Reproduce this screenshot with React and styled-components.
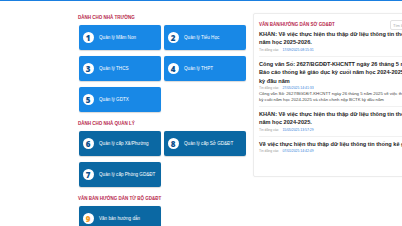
import React from 'react';
import styled, { createGlobalStyle } from 'styled-components';

const GlobalStyle = createGlobalStyle`
    html, body {
        margin: 0;
        padding: 0;
        background: #fff;
        overflow: hidden;
        font-family: "Liberation Sans", Arial, sans-serif;
    }
`;

const schoolItems = [
    { no: 1, label: 'Quản lý Mầm Non' },
    { no: 2, label: 'Quản lý Tiểu Học' },
    { no: 3, label: 'Quản lý THCS' },
    { no: 4, label: 'Quản lý THPT' },
    { no: 5, label: 'Quản lý GDTX' },
];

const managerItems = [
    { no: 6, label: 'Quản lý cấp Xã/Phường' },
    { no: 8, label: 'Quản lý cấp Sở GD&ĐT' },
    { no: 7, label: 'Quản lý cấp Phòng GD&ĐT' },
];

const posts = [
    {
        title: 'KHẨN: Về việc thực hiện thu thập dữ liệu thông tin thống kê giáo dục đầu\nnăm học 2025-2026.',
        date: '17/09/2025 08:15:31',
    },
    {
        title: 'Công văn Số: 2627/BGDĐT-KHCNTT ngày 26 tháng 5 năm 2025 về việc\nBáo cáo thống kê giáo dục kỳ cuối năm học 2024-2025 và chấn chỉnh nộp BCTK\nkỳ đầu năm',
        date: '27/05/2025 14:41:33',
        desc: 'Công văn Số: 2627/BGDĐT-KHCNTT ngày 26 tháng 5 năm 2025 về việc thực hiện báo cáo thống kê giáo dục\nkỳ cuối năm học 2024-2025 và chấn chỉnh nộp BCTK kỳ đầu năm',
    },
    {
        title: 'KHẨN: Về việc thực hiện thu thập dữ liệu thông tin thống kê giáo dục cuối\nnăm học 2024-2025.',
        date: '15/05/2025 13:57:29',
    },
    {
        title: 'Về việc thực hiện thu thập dữ liệu thông tin thống kê giáo dục',
        date: '07/01/2025 14:42:49',
    },
];

const App = () => {
    return (
        <>
            <GlobalStyle />
            <TopBar />
            <Page>
                <LeftColumn>
                    <Section>
                        <SectionTitle>Dành cho nhà trường</SectionTitle>
                        <CardGrid>
                            {schoolItems.map((item) => (
                                <Card key={item.no} $tone="light">
                                    <NumberBadge>{item.no}</NumberBadge>
                                    <CardLabel>{item.label}</CardLabel>
                                </Card>
                            ))}
                        </CardGrid>
                    </Section>
                    <Section>
                        <SectionTitle>Dành cho nhà quản lý</SectionTitle>
                        <CardGrid>
                            {managerItems.map((item) => (
                                <Card key={item.no} $tone="dark">
                                    <NumberBadge>{item.no}</NumberBadge>
                                    <CardLabel>{item.label}</CardLabel>
                                </Card>
                            ))}
                        </CardGrid>
                    </Section>
                    <Section>
                        <SectionTitle>Văn bản hướng dẫn từ Bộ GD&ĐT</SectionTitle>
                        <CardGrid>
                            <Card $tone="dark">
                                <NumberBadge $accent>9</NumberBadge>
                                <CardLabel>Văn bản hướng dẫn</CardLabel>
                            </Card>
                        </CardGrid>
                    </Section>
                </LeftColumn>

                <NewsPanel>
                    <PanelHeader>
                        <PanelTitle>Văn bản/hướng dẫn Sở GD&ĐT</PanelTitle>
                        <SearchInput placeholder="Tìm kiếm..." />
                    </PanelHeader>
                    {posts.map((post, i) => (
                        <Post key={i}>
                            <PostTitle>{post.title}</PostTitle>
                            <PostMeta>
                                Tin đăng vào <span>{post.date}</span>
                            </PostMeta>
                            {post.desc && <PostDesc>{post.desc}</PostDesc>}
                        </Post>
                    ))}
                </NewsPanel>
            </Page>
        </>
    );
};

const TopBar = styled.div`
    height: 1px;
    background: #1a7fe0;
`;

const Page = styled.main`
    display: flex;
    align-items: flex-start;
    gap: 7px;
    padding: 12px 0 0 79px;
`;

const LeftColumn = styled.div`
    width: 167px;
    flex-shrink: 0;
    padding-top: 1px;
    display: flex;
    flex-direction: column;
    gap: 8px;
`;

const Section = styled.section`
    display: flex;
    flex-direction: column;
`;

const SectionTitle = styled.h2`
    margin: 0 0 3px -1px;
    font-size: 4.5px;
    line-height: 8px;
    font-weight: 700;
    text-transform: uppercase;
    color: #b8284c;
`;

const PanelTitle = styled(SectionTitle).attrs({ as: 'h3' })`
    margin: 0;
    line-height: 6px;
`;

const CardGrid = styled.div`
    display: grid;
    grid-template-columns: 82px 82px;
    column-gap: 3px;
    row-gap: 6px;
`;

const Card = styled.div`
    height: 25px;
    box-sizing: border-box;
    display: flex;
    align-items: center;
    gap: 5.5px;
    padding-left: 3.5px;
    border-radius: 2px;
    background: ${({ $tone }) => ($tone === 'dark' ? '#0b68a3' : '#1888e6')};
    box-shadow: 0 0.5px 1px rgba(0, 0, 0, 0.15);
    cursor: pointer;
`;

const NumberBadge = styled.span`
    width: 11px;
    height: 11px;
    border-radius: 50%;
    background: #fff;
    display: flex;
    align-items: center;
    justify-content: center;
    font-family: "Open Sans", sans-serif;
    font-size: 8px;
    font-weight: 800;
    line-height: 1;
    color: ${({ $accent }) => ($accent ? '#f39a1e' : '#0b4f8c')};
    flex-shrink: 0;
`;

const CardLabel = styled.span`
    font-size: 4.6px;
    color: #fff;
    white-space: nowrap;
`;

const NewsPanel = styled.aside`
    width: 243px;
    height: 164px;
    flex-shrink: 0;
    box-sizing: border-box;
    border: 1px solid #ececec;
    border-radius: 2px;
    padding: 8px 5px;
    background: #fff;
    box-shadow: 0 0 2px rgba(0, 0, 0, 0.04);
`;

const PanelHeader = styled.div`
    display: flex;
    align-items: center;
    height: 6px;
    margin-bottom: 2px;
`;

const SearchInput = styled.input`
    flex: 0 0 100px;
    width: 100px;
    height: 10px;
    margin-left: auto;
    box-sizing: border-box;
    border: 1px solid #e2e2e2;
    border-radius: 2px;
    padding: 0 2px;
    font-size: 4px;
    font-family: inherit;
    outline: none;

    &::placeholder {
        color: #aaa;
    }
`;

const Post = styled.article`
    padding: 3px 0;
    border-bottom: 1px solid #f1f1f1;

    &:first-of-type {
        padding-top: 0;
    }
    &:last-of-type {
        border-bottom: none;
    }
`;

const PostTitle = styled.div`
    font-size: 5.6px;
    line-height: 8.4px;
    font-weight: 700;
    color: #252525;
    white-space: pre-line;
`;

const PostMeta = styled.div`
    font-size: 3.4px;
    line-height: 6px;
    color: #9a9a9a;

    span {
        margin-left: 3px;
        color: #2f7ed8;
    }
`;

const PostDesc = styled.div`
    font-size: 4.3px;
    line-height: 6px;
    color: #444;
    white-space: pre-line;
`;

export default App;
